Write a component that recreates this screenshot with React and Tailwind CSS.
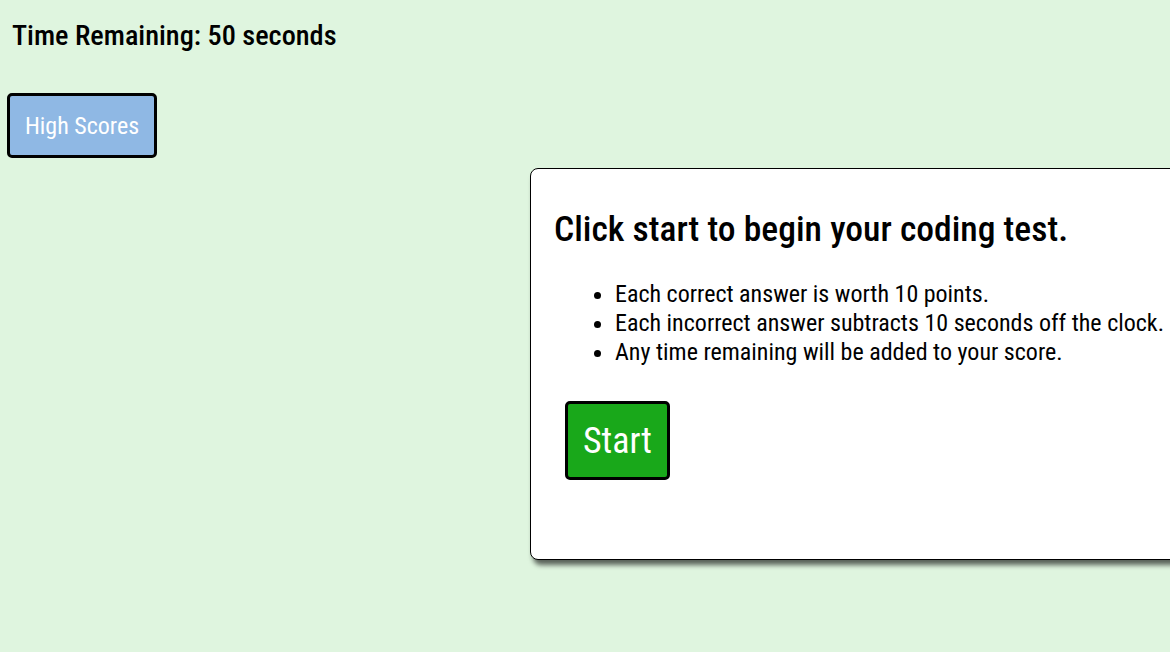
export default function App() {
  return (
    <div className="min-h-[652px] w-[1170px] overflow-hidden bg-[#dff5df] font-['Roboto',sans-serif] font-stretch-condensed text-black">
      <div className="pl-[12px] pt-[19px] text-[28.3px] font-medium leading-[34px]">Time Remaining: 50 seconds</div>
      <div className="pl-[7px] pt-[40px]">
        <button className="h-[65px] w-[150px] rounded-[5px] border-[3px] border-black bg-[#8fb8e4] text-[24px] text-white">High Scores</button>
      </div>
      <div className="pl-[530px] pt-[10px]">
        <div className="h-[392px] w-[700px] rounded-[8px] border border-black bg-white pl-[23px] pt-[36px] shadow-[3px_5px_5px_rgba(0,0,0,0.6)]">
          <h1 className="text-[35.6px] font-medium leading-[48px]">Click start to begin your coding test.</h1>
          <ul className="mt-[27px] list-disc pl-[61px] text-[24px] leading-[29px]">
            <li>Each correct answer is worth 10 points.</li>
            <li>Each incorrect answer subtracts 10 seconds off the clock.</li>
            <li>Any time remaining will be added to your score.</li>
          </ul>
          <button className="ml-[11px] mt-[34px] h-[79px] w-[105px] rounded-[5px] border-[3px] border-black bg-[#19a81a] text-[36px] text-white">Start</button>
        </div>
      </div>
    </div>
  );
}
